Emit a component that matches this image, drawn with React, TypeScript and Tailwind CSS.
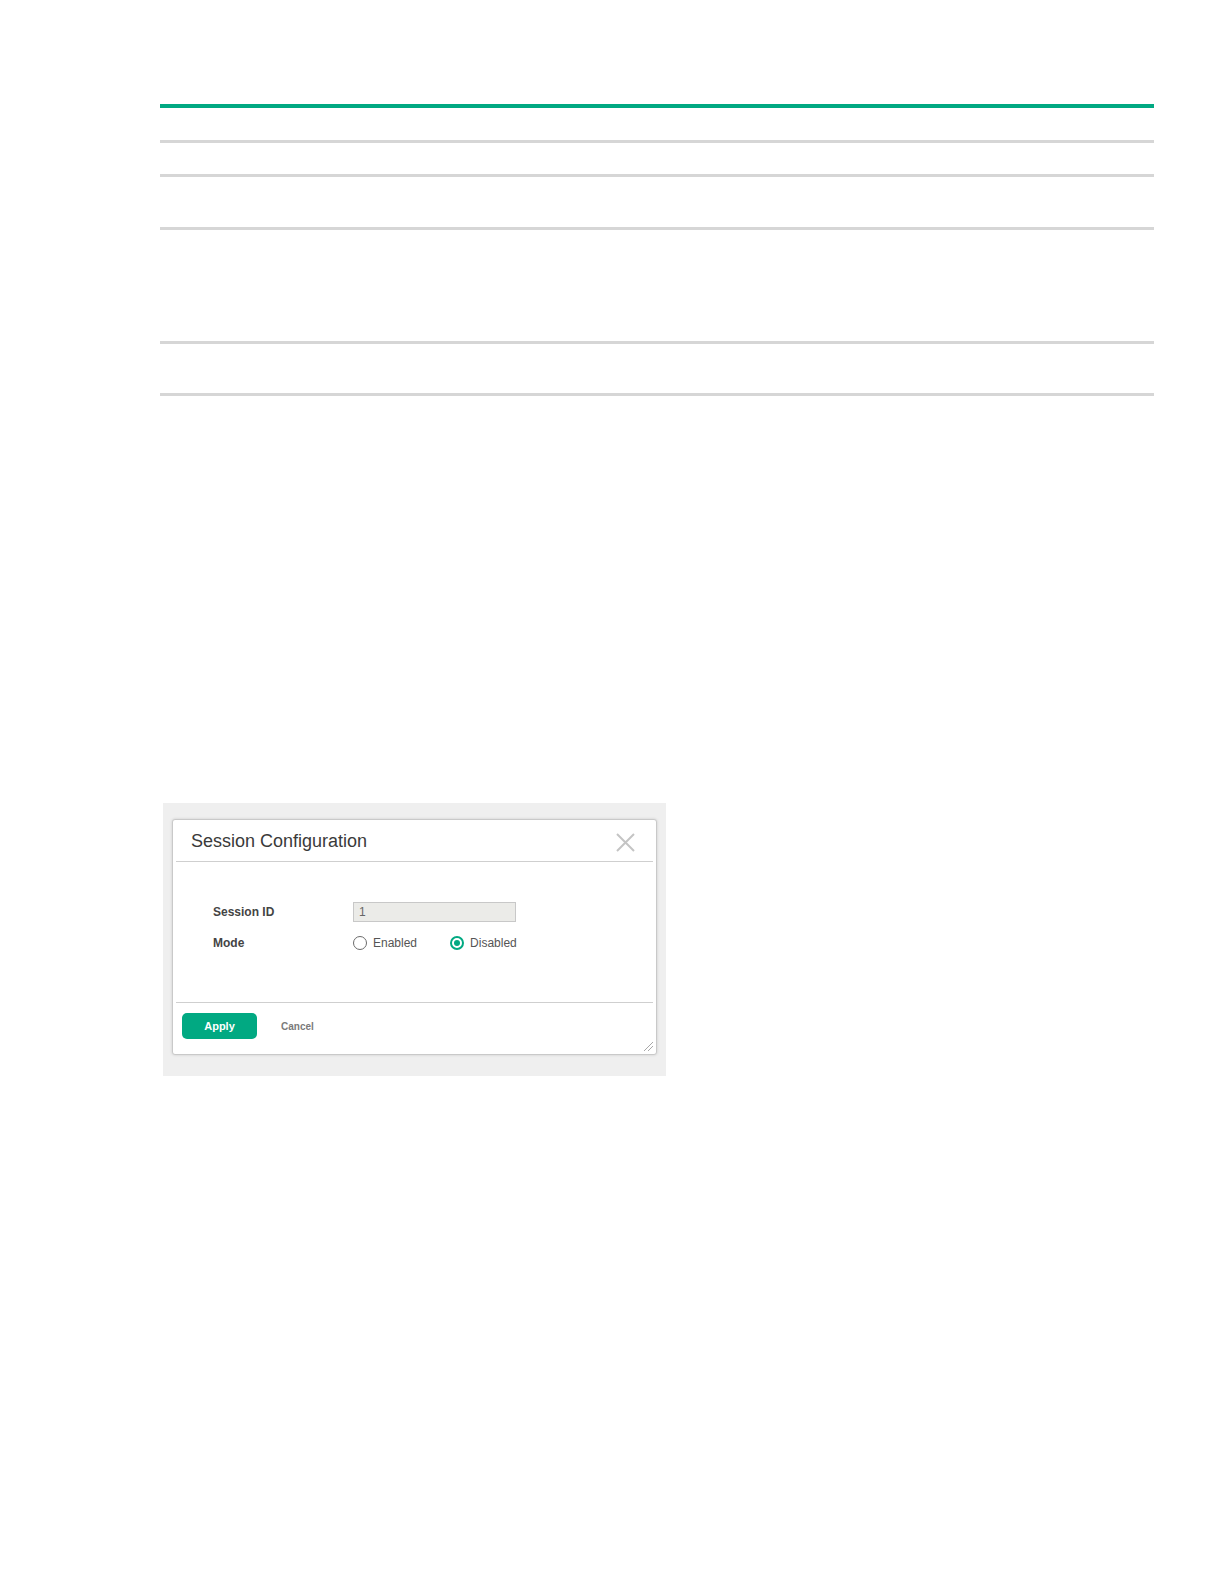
function Radio({ checked, label }: { checked?: boolean; label: string }) {
  return (
    <label className="flex items-center gap-[6px] text-[12px] text-[#555]">
      {checked ? (
        <span className="flex h-[14px] w-[14px] items-center justify-center rounded-full border-2 border-[#01a982]">
          <span className="h-[6px] w-[6px] rounded-full bg-[#01a982]" />
        </span>
      ) : (
        <span className="h-[14px] w-[14px] rounded-full border-[1.5px] border-[#6b6b6b]" />
      )}
      {label}
    </label>
  );
}

function SessionDialog() {
  return (
    <div className="relative flex h-[236px] w-[485px] flex-col rounded-[3px] border border-[#c9c9c9] bg-white px-[3px] shadow-[0_0_3px_rgba(0,0,0,0.15)]">
      <div className="flex h-[42px] items-center justify-between border-b border-[#cfcfcf] pl-[15px] pr-[18px]">
        <h2 className="mt-[2px] text-[18px] text-[#3a3a3a]">Session Configuration</h2>
        <svg width="19" height="19" viewBox="0 0 19 19" className="mt-[3px]">
          <path d="M1 1L18 18M18 1L1 18" stroke="#c4c4c4" strokeWidth="2" />
        </svg>
      </div>

      <div className="h-[141px] border-b border-[#cfcfcf] pl-[37px] pt-[40px]">
        <div className="flex h-[20px] items-center">
          <span className="w-[140px] text-[12px] font-bold text-[#444]">Session ID</span>
          <div className="flex h-[20px] w-[163px] items-center border border-[#c8c8c8] bg-[#ebebe8] pl-[5px] text-[12px] text-[#666]">
            1
          </div>
        </div>
        <div className="mt-[11px] flex h-[20px] items-center">
          <span className="w-[140px] text-[12px] font-bold text-[#444]">Mode</span>
          <div className="flex items-center gap-[33px]">
            <Radio label="Enabled" />
            <Radio checked label="Disabled" />
          </div>
        </div>
      </div>

      <div className="flex items-center gap-[24px] pl-[6px] pt-[10px]">
        <button className="h-[26px] w-[75px] rounded-[5px] bg-[#01a982] text-[11px] font-bold text-white">
          Apply
        </button>
        <button className="text-[10px] font-bold text-[#7a7a7a]">Cancel</button>
      </div>

      <svg width="11" height="11" viewBox="0 0 11 11" className="absolute bottom-[2px] right-[2px]">
        <path d="M10 1L1 10M10 5L5 10" stroke="#a8a8a8" strokeWidth="1" />
      </svg>
    </div>
  );
}

export default function App() {
  return (
    <div className="min-h-[1584px] bg-white font-['Liberation_Sans',Arial,sans-serif]">
      <div className="ml-[160px] w-[994px] pt-[104px]">
        <div className="h-[4px] bg-[#01a982]" />
        <div className="mt-[32px] h-[3px] bg-[#d6d6d6]" />
        <div className="mt-[31px] h-[3px] bg-[#d6d6d6]" />
        <div className="mt-[50px] h-[3px] bg-[#d6d6d6]" />
        <div className="mt-[111px] h-[3px] bg-[#d6d6d6]" />
        <div className="mt-[49px] h-[3px] bg-[#d6d6d6]" />
      </div>

      <div className="ml-[163px] mt-[407px] h-[273px] w-[503px] bg-[#efefef] px-[9px] pt-[16px]">
        <SessionDialog />
      </div>
    </div>
  );
}
